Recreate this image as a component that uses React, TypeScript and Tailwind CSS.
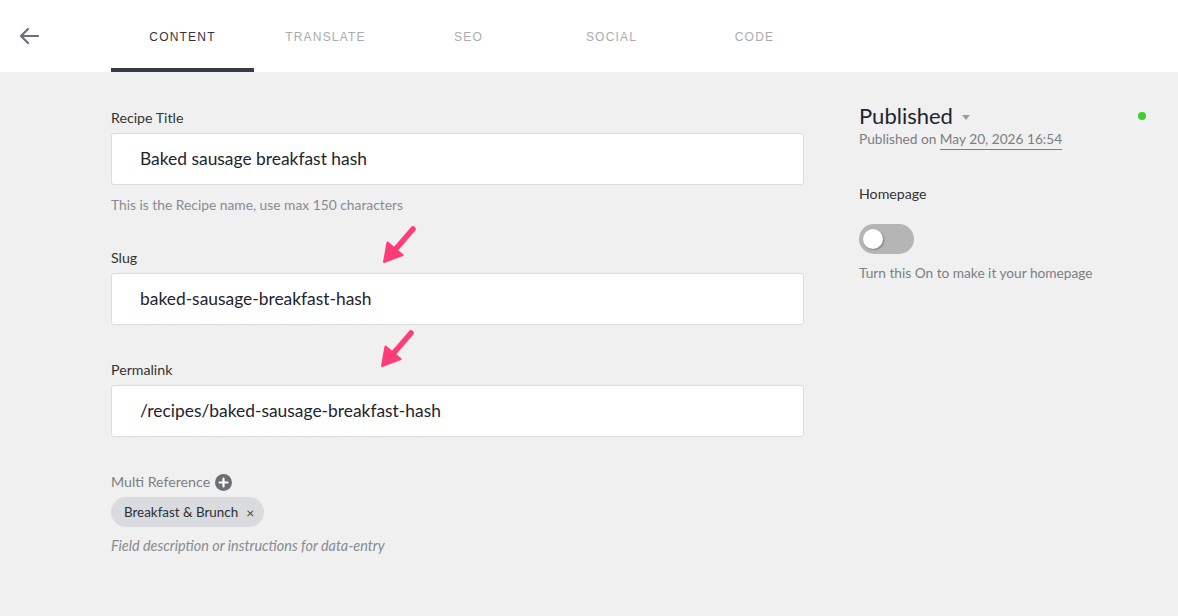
import React from "react";

const tabs = ["CONTENT", "TRANSLATE", "SEO", "SOCIAL", "CODE"];

function PinkArrow({ className }: { className: string }) {
  return (
    <svg className={className} width="36" height="40" viewBox="0 0 36 40" fill="none">
      <line x1="31" y1="4" x2="12" y2="26" stroke="#ff3c78" strokeWidth="5.5" strokeLinecap="round" />
      <polygon points="2,37 5.5,17.5 20.5,30" fill="#ff3c78" stroke="#ff3c78" strokeWidth="2" strokeLinejoin="round" />
    </svg>
  );
}

function Field({ label, value }: { label: string; value: string }) {
  return (
    <div>
      <div className="text-[14.2px] leading-[20px] text-[#333]">{label}</div>
      <div className="mt-[5px] h-[52px] bg-white border border-[#dcdcdc] rounded-[3px] flex items-center pl-[28px] text-[17.4px] text-[#1f2430]">
        {value}
      </div>
    </div>
  );
}

export default function App() {
  return (
    <div
      className="w-[1178px] h-[616px] bg-[#f0f0f0] relative overflow-hidden"
      style={{ fontFamily: "Lato, 'Noto Sans', sans-serif" }}
    >
      <header className="h-[72px] bg-white flex">
        <div className="w-[111px] flex items-center pl-[19px]">
          <svg width="20" height="18" viewBox="0 0 20 18" fill="none">
            <path d="M19 9H2M9 2L2 9l7 7" stroke="#6b7079" strokeWidth="2.2" strokeLinecap="round" strokeLinejoin="round" />
          </svg>
        </div>
        {tabs.map((t, i) => (
          <div
            key={t}
            className={`w-[143px] h-full flex items-center justify-center pt-[5px] text-[12px] tracking-[1.2px] border-b-4 ${
              i === 0 ? "border-[#373c47] text-[#2f3440]" : "border-transparent text-[#a9abaf]"
            }`}
            style={{ fontFamily: "'Liberation Sans', Arial, sans-serif" }}
          >
            {t}
          </div>
        ))}
      </header>

      <div className="flex pl-[111px] pt-[36px]">
        <div className="w-[693px]">
          <Field label="Recipe Title" value="Baked sausage breakfast hash" />
          <div className="mt-[10px] text-[13.8px] leading-[20px] text-[#888b90]">
            This is the Recipe name, use max 150 characters
          </div>
          <div className="mt-[33px]">
            <Field label="Slug" value="baked-sausage-breakfast-hash" />
          </div>
          <div className="mt-[35px]">
            <Field label="Permalink" value="/recipes/baked-sausage-breakfast-hash" />
          </div>
          <div className="mt-[35px] flex items-center gap-[5px] text-[14.2px] leading-[20px] text-[#7b7e84]">
            Multi Reference
            <svg width="17" height="17" viewBox="0 0 17 17">
              <circle cx="8.5" cy="8.5" r="8.5" fill="#6b6f76" />
              <path d="M8.5 4.5v8M4.5 8.5h8" stroke="white" strokeWidth="2.2" strokeLinecap="round" />
            </svg>
          </div>
          <div className="mt-[5px] inline-flex items-center h-[30px] rounded-full bg-[#d9dbde] pl-[13px] pr-[10px] text-[13.4px] text-[#2a2e36] gap-[8px]">
            Breakfast &amp; Brunch
            <span className="text-[14px] text-[#444]">×</span>
          </div>
          <div className="mt-[9px] text-[14.4px] leading-[20px] italic text-[#888b90]">
            Field description or instructions for data-entry
          </div>
        </div>

        <div className="ml-[55px] flex-1 pr-[32px]">
          <div className="flex items-start justify-between -mt-[5px]">
            <div className="flex items-center gap-[8px] text-[22px] leading-[26px] text-[#1f2430]">
              Published
              <svg width="10" height="7" viewBox="0 0 10 7" className="mt-[3px]">
                <polygon points="1,1 9,1 5,6" fill="#9a9da2" />
              </svg>
            </div>
            <div className="w-[8px] h-[8px] rounded-full bg-[#3ecf2e] mt-[9px]" />
          </div>
          <div className="mt-[1px] text-[13.7px] leading-[18px] text-[#7b7e84]">
            Published on{" "}
            <span className="border-b border-[#7b7e84] pb-[2px]">May 20, 2026 16:54</span>
          </div>
          <div className="mt-[36px] text-[14.2px] leading-[20px] text-[#333]">Homepage</div>
          <div className="mt-[20px] w-[55px] h-[30px] rounded-full bg-[#b5b5b5] flex items-center pl-[4px]">
            <div className="w-[20px] h-[20px] rounded-full bg-white shadow-[1px_1px_2px_rgba(0,0,0,0.3)]" />
          </div>
          <div className="mt-[9px] text-[13.7px] leading-[20px] text-[#7b7e84]">
            Turn this On to make it your homepage
          </div>
        </div>
      </div>

      <PinkArrow className="absolute left-[382px] top-[225px]" />
      <PinkArrow className="absolute left-[380px] top-[329px]" />
    </div>
  );
}
